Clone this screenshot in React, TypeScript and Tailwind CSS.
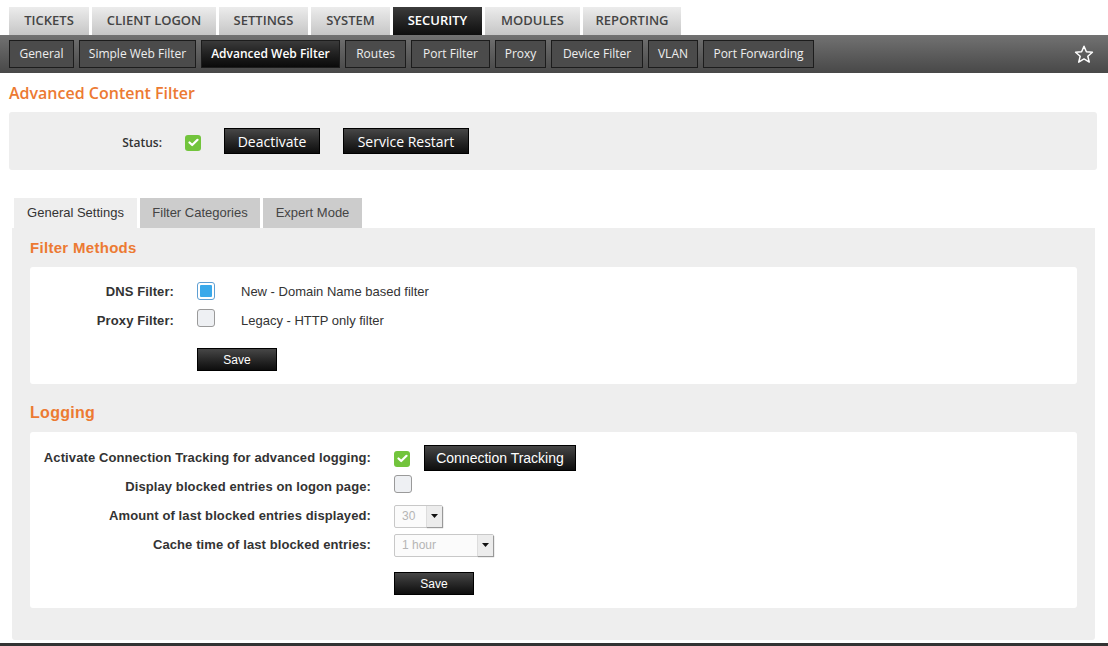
import React from "react";

const topTabs = [
  { t: "TICKETS", w: "w-[80px]" },
  { t: "CLIENT LOGON", w: "w-[124px]" },
  { t: "SETTINGS", w: "w-[89px]" },
  { t: "SYSTEM", w: "w-[79px]" },
  { t: "SECURITY", w: "w-[89px]", active: true },
  { t: "MODULES", w: "w-[95px]" },
  { t: "REPORTING", w: "w-[98px]" },
];

const subTabs = [
  { t: "General", w: "w-[65px]" },
  { t: "Simple Web Filter", w: "w-[117px]" },
  { t: "Advanced Web Filter", w: "w-[139px]", active: true },
  { t: "Routes", w: "w-[61px]" },
  { t: "Port Filter", w: "w-[79px]" },
  { t: "Proxy", w: "w-[51px]" },
  { t: "Device Filter", w: "w-[92px]" },
  { t: "VLAN", w: "w-[50px]" },
  { t: "Port Forwarding", w: "w-[111px]" },
];

const navFont = { fontFamily: '"Open Sans", "DejaVu Sans", sans-serif' };

function GreenCheck() {
  return (
    <span className="inline-flex h-[16px] w-[16px] items-center justify-center rounded-[3px] bg-[#72c43c]">
      <svg width="11" height="9" viewBox="0 0 11 9">
        <path d="M1.5 4.5 L4.2 7 L9.5 1.8" fill="none" stroke="white" strokeWidth="2.2" strokeLinecap="round" strokeLinejoin="round" />
      </svg>
    </span>
  );
}

function EmptyBox() {
  return <span className="inline-block h-[18px] w-[18px] rounded-[3px] border border-[#9a9a9a] bg-[#eef0f3]" />;
}

function BlueBox() {
  return (
    <span className="inline-flex h-[18px] w-[18px] items-center justify-center rounded-[3px] border border-[#5e9fd3] bg-white">
      <span className="h-[12px] w-[12px] rounded-[1px] bg-[#3aa9ea]" />
    </span>
  );
}

function DarkBtn({ children, cls }: { children: React.ReactNode; cls: string }) {
  return (
    <div
      className={`flex items-center justify-center border border-black bg-gradient-to-b from-[#474747] to-[#0e0e0e] text-white ${cls}`}
    >
      {children}
    </div>
  );
}

function Select({ value, w }: { value: string; w: string }) {
  return (
    <div className={`flex h-[23px] ${w} items-stretch rounded-[2px] border border-[#c8c8c8] bg-[#fbfbfb]`}>
      <div className="flex flex-1 items-center pl-[7px] text-[12px] text-[#b5b5b5]">{value}</div>
      <div className="flex w-[16px] items-center justify-center border-l border-[#ddd] bg-[#ececec] shadow-[1px_1px_1px_#999]">
        <svg width="7" height="4" viewBox="0 0 7 4">
          <path d="M0 0 H7 L3.5 4 Z" fill="#111" />
        </svg>
      </div>
    </div>
  );
}

const label = "text-right text-[13px] font-bold tracking-[0.1px] text-[#333]";

export default function App() {
  const arial = { fontFamily: '"Liberation Sans", Arial, sans-serif' };
  return (
    <div className="h-[646px] w-[1108px] overflow-hidden bg-white" style={arial}>
      {/* top tabs */}
      <div className="flex h-[35px] items-end gap-[3px] pl-[9px]" style={navFont}>
        {topTabs.map((t) => (
          <div
            key={t.t}
            className={`flex h-[28px] ${t.w} items-center justify-center text-[13px] font-semibold ${
              t.active
                ? "bg-gradient-to-b from-[#3c3c3c] to-[#0f0f0f] text-white"
                : "bg-gradient-to-b from-[#ececec] to-[#c6c6c6] text-[#454545]"
            }`}
          >
            {t.t}
          </div>
        ))}
      </div>
      {/* sub nav */}
      <div
        className="flex h-[38px] items-center gap-[5px] bg-gradient-to-b from-[#727272] to-[#484848] pl-[9px] pr-[14px]"
        style={navFont}
      >
        {subTabs.map((t) => (
          <div
            key={t.t}
            className={`flex h-[28px] ${t.w} items-center justify-center border border-[#1c1c1c] text-[12px] ${
              t.active
                ? "bg-gradient-to-b from-[#3a3a3a] to-[#0a0a0a] font-semibold text-white"
                : "bg-[#4b4b4b] text-[#eeeeee]"
            }`}
          >
            {t.t}
          </div>
        ))}
        <div className="flex-1" />
        <svg width="20" height="19" viewBox="0 0 24 23">
          <path
            d="M12 1.5 L14.9 8.2 L22.2 8.8 L16.6 13.6 L18.4 20.7 L12 16.9 L5.6 20.7 L7.4 13.6 L1.8 8.8 L9.1 8.2 Z"
            fill="none"
            stroke="white"
            strokeWidth="1.8"
            strokeLinejoin="round"
          />
        </svg>
      </div>

      {/* title */}
      <div className="px-[9px] pt-[8px] text-[16px] leading-[24px] font-semibold text-[#ec7a32]" style={navFont}>
        Advanced Content Filter
      </div>

      {/* status panel */}
      <div className="mx-[9px] mt-[7px] flex h-[58px] w-[1088px] items-center rounded-[3px] bg-[#eeeeee]" style={navFont}>
        <div className="w-[153px] pt-[3px] text-right text-[12px] font-semibold text-[#333]">Status:</div>
        <div className="ml-[23px]">
          <GreenCheck />
        </div>
        <DarkBtn cls="ml-[23px] h-[26px] w-[96px] text-[14px]">Deactivate</DarkBtn>
        <DarkBtn cls="ml-[23px] h-[26px] w-[126px] text-[14px]">Service Restart</DarkBtn>
      </div>

      {/* tabs */}
      <div className="ml-[14px] mt-[28px] flex gap-[3px] text-[13px]">
        <div className="flex h-[30px] w-[123px] items-center justify-center bg-[#eeeeee] text-[#333]">General Settings</div>
        <div className="flex h-[30px] w-[120px] items-center justify-center bg-[#cccccc] text-[#444]">Filter Categories</div>
        <div className="flex h-[30px] w-[99px] items-center justify-center bg-[#cccccc] text-[#444]">Expert Mode</div>
      </div>

      {/* tab panel */}
      <div className="ml-[12px] h-[412px] w-[1083px] rounded-b-[3px] bg-[#eeeeee] px-[18px] pt-[10px]">
        <div className="text-[15px] leading-[20px] font-bold tracking-[0.3px] text-[#ec7a32]">Filter Methods</div>
        <div className="mt-[9px] h-[117px] w-[1047px] rounded-[3px] bg-white pt-[16px]">
          <div className="flex h-[18px] items-center">
            <div className={`w-[144px] ${label}`}>DNS Filter:</div>
            <div className="ml-[23px]">
              <BlueBox />
            </div>
            <div className="ml-[26px] text-[13px] text-[#333]">New - Domain Name based filter</div>
          </div>
          <div className="mt-[11px] flex h-[18px] items-center">
            <div className={`w-[144px] ${label}`}>Proxy Filter:</div>
            <div className="ml-[23px]">
              <EmptyBox />
            </div>
            <div className="ml-[26px] text-[13px] text-[#333]">Legacy - HTTP only filter</div>
          </div>
          <DarkBtn cls="ml-[167px] mt-[18px] h-[23px] w-[80px] text-[12px]">Save</DarkBtn>
        </div>

        <div className="mt-[19px] text-[16px] leading-[20px] font-bold tracking-[0.3px] text-[#ec7a32]">Logging</div>
        <div className="mt-[9px] h-[176px] w-[1047px] rounded-[3px] bg-white pt-[13px]">
          <div className="flex h-[26px] items-center">
            <div className={`w-[341px] ${label}`}>Activate Connection Tracking for advanced logging:</div>
            <div className="ml-[23px]">
              <GreenCheck />
            </div>
            <DarkBtn cls="ml-[14px] h-[26px] w-[152px] text-[14px]">Connection Tracking</DarkBtn>
          </div>
          <div className="mt-[3px] flex h-[26px] items-center">
            <div className={`w-[341px] ${label}`}>Display blocked entries on logon page:</div>
            <div className="ml-[23px]">
              <EmptyBox />
            </div>
          </div>
          <div className="mt-[3px] flex h-[26px] items-center">
            <div className={`w-[341px] ${label}`}>Amount of last blocked entries displayed:</div>
            <div className="ml-[23px]">
              <Select value="30" w="w-[49px]" />
            </div>
          </div>
          <div className="mt-[3px] flex h-[26px] items-center">
            <div className={`w-[341px] ${label}`}>Cache time of last blocked entries:</div>
            <div className="ml-[23px]">
              <Select value="1 hour" w="w-[100px]" />
            </div>
          </div>
          <DarkBtn cls="ml-[364px] mt-[14px] h-[23px] w-[80px] text-[12px]">Save</DarkBtn>
        </div>
      </div>
      <div className="mt-[3px] h-[3px] w-full bg-[#333]" />
    </div>
  );
}
